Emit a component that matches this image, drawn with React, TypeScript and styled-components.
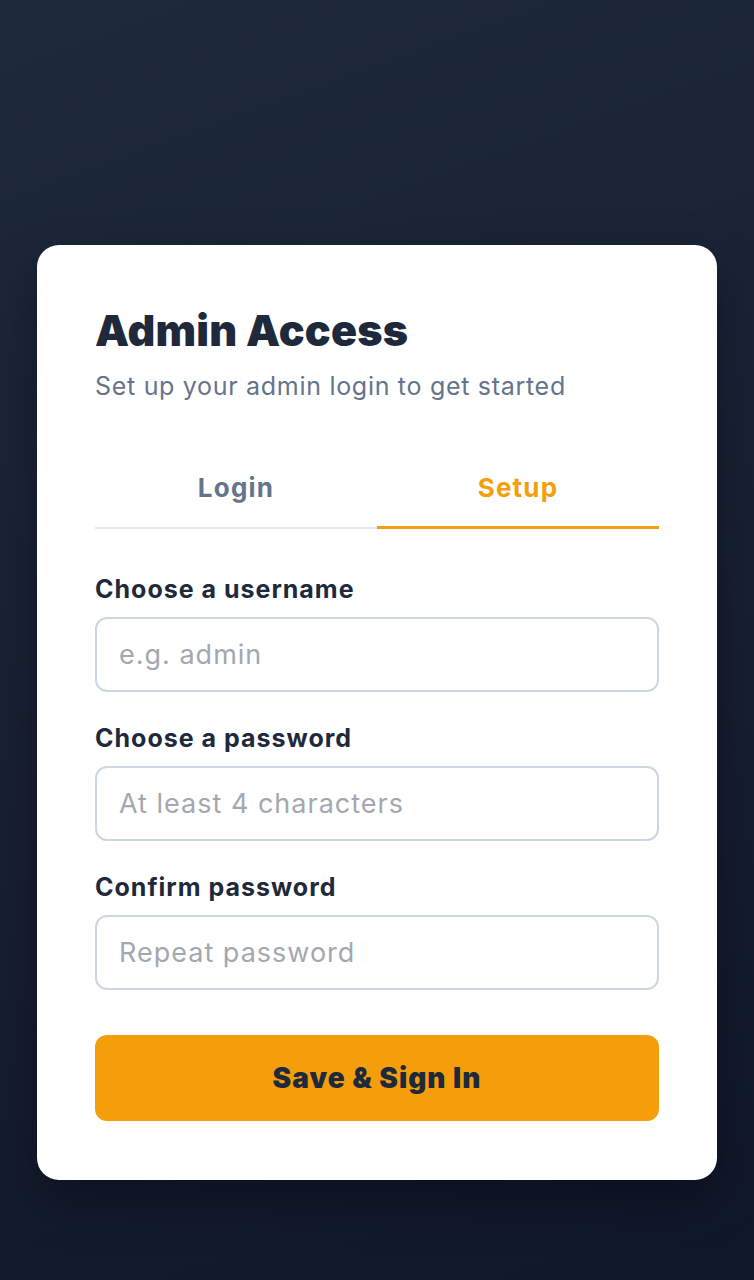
import React, { useState } from "react";
import styled, { createGlobalStyle } from "styled-components";

const GlobalStyle = createGlobalStyle`
  * { box-sizing: border-box; }
  html, body {
    margin: 0;
    padding: 0;
    font-family: Inter, "Noto Sans", "Liberation Sans", sans-serif;
  }
`;

const Page = styled.div`
  min-height: 1280px;
  padding: 245px 37px 60px;
  background: linear-gradient(160deg, #1e293b 0%, #172033 55%, #0f172a 100%);
`;

const Card = styled.div`
  background: #ffffff;
  border-radius: 22px;
  padding: 58px 58px 59px;
  box-shadow: 0 20px 50px rgba(0, 0, 0, 0.35);
`;

const Title = styled.h1`
  margin: 0;
  font-size: 43px;
  line-height: 54px;
  font-weight: 900;
  color: #1e293b;
  letter-spacing: 0.2px;
`;

const Subtitle = styled.p`
  margin: 13px 0 0;
  font-size: 25px;
  line-height: 32px;
  color: #64748b;
  letter-spacing: 0.7px;
`;

const Tabs = styled.div`
  display: flex;
  margin-top: 51px;
  border-bottom: 2px solid #e5e7eb;
`;

const Tab = styled.button<{ $active?: boolean }>`
  flex: 1;
  height: 76px;
  margin-bottom: -2px;
  padding: 0 0 4px;
  background: none;
  border: none;
  border-bottom: 3px solid ${(p) => (p.$active ? "#f59e0b" : "transparent")};
  font-family: inherit;
  font-size: 26px;
  font-weight: 700;
  letter-spacing: 1.2px;
  color: ${(p) => (p.$active ? "#f59e0b" : "#64748b")};
  cursor: pointer;
`;

const Form = styled.form`
  display: flex;
  flex-direction: column;
  margin-top: 45px;
`;

const Field = styled.div`
  display: flex;
  flex-direction: column;
  gap: 13px;
  & + & {
    margin-top: 31px;
  }
`;

const Label = styled.label`
  font-size: 25px;
  line-height: 30px;
  font-weight: 700;
  letter-spacing: 1px;
  color: #1e293b;
`;

const Input = styled.input`
  height: 75px;
  padding: 0 22px;
  border: 2px solid #cdd6e1;
  border-radius: 12px;
  font-family: inherit;
  font-size: 27px;
  letter-spacing: 1px;
  color: #1e293b;
  background: #fff;
  outline: none;

  &::placeholder {
    color: #a3a8b0;
  }
`;

const Submit = styled.button`
  margin-top: 45px;
  height: 86px;
  border: none;
  border-radius: 12px;
  background: #f59e0b;
  color: #1e293b;
  font-family: inherit;
  font-size: 28px;
  font-weight: 900;
  letter-spacing: 1px;
  cursor: pointer;
`;

export default function App() {
  const [tab, setTab] = useState("setup");
  return (
    <Page>
      <GlobalStyle />
      <Card>
        <Title>Admin Access</Title>
        <Subtitle>Set up your admin login to get started</Subtitle>
        <Tabs>
          <Tab $active={tab === "login"} onClick={() => setTab("login")}>
            Login
          </Tab>
          <Tab $active={tab === "setup"} onClick={() => setTab("setup")}>
            Setup
          </Tab>
        </Tabs>
        <Form onSubmit={(e) => e.preventDefault()}>
          <Field>
            <Label>Choose a username</Label>
            <Input placeholder="e.g. admin" />
          </Field>
          <Field>
            <Label>Choose a password</Label>
            <Input type="password" placeholder="At least 4 characters" />
          </Field>
          <Field>
            <Label>Confirm password</Label>
            <Input type="password" placeholder="Repeat password" />
          </Field>
          <Submit type="submit">Save &amp; Sign In</Submit>
        </Form>
      </Card>
    </Page>
  );
}
